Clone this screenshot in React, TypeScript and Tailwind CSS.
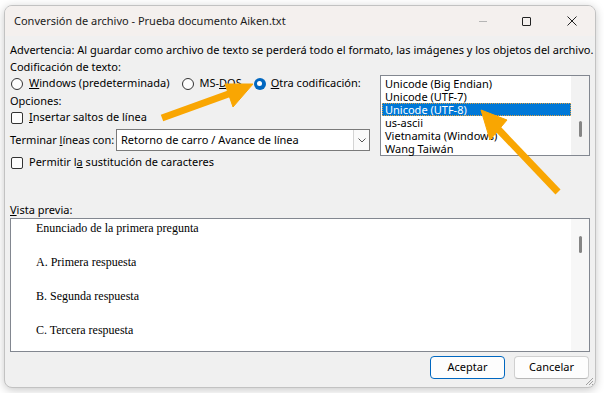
import React from "react";

const ui = "font-['Noto_Sans',sans-serif] text-[11px] text-black";

const Radio = ({ checked }: { checked?: boolean }) =>
  checked ? (
    <span className="w-[12px] h-[12px] rounded-full bg-[#0067c0] flex items-center justify-center shrink-0">
      <span className="w-[5px] h-[5px] rounded-full bg-white" />
    </span>
  ) : (
    <span className="w-[12px] h-[12px] rounded-full border border-[#333] bg-[#fdfdfd] shrink-0" />
  );

const Check = () => (
  <span className="w-[12px] h-[12px] rounded-[2px] border border-[#333] bg-[#fdfdfd] shrink-0" />
);

const encodings = [
  "Unicode (Big Endian)",
  "Unicode (UTF-7)",
  "Unicode (UTF-8)",
  "us-ascii",
  "Vietnamita (Windows)",
  "Wang Taiwán"
];

const preview = [
  "Enunciado de la primera pregunta",
  "A. Primera respuesta",
  "B. Segunda respuesta",
  "C. Tercera respuesta"
];

export default function App() {
  return (
    <div className={`w-[604px] h-[393px] bg-white relative overflow-hidden ${ui}`}>
      <div className="pt-[5px] pl-[4px]">
        <div className="w-[592px] h-[383px] rounded-[8px] border border-[#c2c2c2] bg-[#f0f0f0] shadow-[0_2px_10px_rgba(0,0,0,0.22)] flex flex-col overflow-hidden">
          {/* title bar */}
          <div className="h-[30px] bg-[#f4f0ee] flex items-center pl-[9px] shrink-0">
            <span className="flex-1 text-[#1b1b1b]">
              Conversión de archivo - Prueba documento Aiken.txt
            </span>
            <span className="w-[8px] h-px bg-[#b5b5b5] mr-[35px]" />
            <span className="w-[9px] h-[9px] border border-[#222] rounded-[1px] mr-[36px]" />
            <svg width="10" height="10" viewBox="0 0 10 10" className="mr-[18px]">
              <path d="M0.5 0.5 L9.5 9.5 M9.5 0.5 L0.5 9.5" stroke="#222" strokeWidth="1" />
            </svg>
          </div>

          {/* body */}
          <div className="flex-1 flex flex-col pl-[5px] pr-[4px] pt-[5px]">
            <div className="h-[17px] leading-[17px] whitespace-nowrap">
              Advertencia: Al guardar como archivo de texto se perderá todo el formato, las imágenes y los objetos del archivo.
            </div>
            <div className="h-[17px] leading-[17px]">Codificación de texto:</div>

            <div className="flex gap-[10px]">
              <div className="w-[360px] flex flex-col">
                <div className="h-[17px] flex items-center pl-px">
                  <Radio />
                  <span className="ml-[6px]">
                    <span className="underline">W</span>indows (predeterminada)
                  </span>
                  <span className="ml-[13px]" />
                  <Radio />
                  <span className="ml-[5px]">
                    MS-<span className="underline">D</span>OS
                  </span>
                  <span className="ml-[12px]" />
                  <Radio checked />
                  <span className="ml-[5px]">
                    <span className="underline">O</span>tra codificación:
                  </span>
                </div>
                <div className="h-[17px] leading-[17px]">Opciones:</div>
                <div className="h-[17px] flex items-center pl-px">
                  <Check />
                  <span className="ml-[6px]">
                    <span className="underline">I</span>nsertar saltos de línea
                  </span>
                </div>
                <div className="mt-[3px] h-[22px] flex items-center">
                  <span className="w-[106px]">
                    Terminar <span className="underline">l</span>íneas con:
                  </span>
                  <div className="flex-1 h-[22px] border border-[#7a7a7a] bg-white flex items-center">
                    <span className="flex-1 pl-[4px]">Retorno de carro / Avance de línea</span>
                    <span className="w-[16px] h-[20px] border-l border-[#d4d4d4] bg-[#fafafa] flex items-center justify-center">
                      <svg width="8" height="5" viewBox="0 0 8 5">
                        <path d="M0.5 0.5 L4 4 L7.5 0.5" fill="none" stroke="#555" strokeWidth="1" />
                      </svg>
                    </span>
                  </div>
                </div>
                <div className="mt-[3px] h-[17px] flex items-center pl-px">
                  <Check />
                  <span className="ml-[6px]">
                    Permitir l<span className="underline">a</span> sustitución de caracteres
                  </span>
                </div>
              </div>

              {/* encoding list */}
              <div className="w-[210px] h-[81px] border border-[#828790] bg-white flex">
                <div className="flex-1 pt-px pl-px">
                  {encodings.map((e, i) => (
                    <div
                      key={e}
                      className={`h-[13px] leading-[13px] pl-[3px] whitespace-nowrap ${
                        i === 2
                          ? "bg-[#0078d7] text-white outline-1 outline-dotted outline-[#e0a040] -outline-offset-1"
                          : ""
                      }`}
                    >
                      {e}
                    </div>
                  ))}
                </div>
                <div className="w-[18px] bg-[#f2f2f2] flex justify-center pt-[45px]">
                  <span className="w-[3px] h-[16px] bg-[#858585] rounded-full" />
                </div>
              </div>
            </div>

            <div className="mt-[30px] h-[17px] leading-[17px]">
              <span className="underline">V</span>ista previa:
            </div>

            <div className="w-[580px] h-[134px] border border-[#828790] bg-white flex">
              <div className="flex-1 pt-[2px] pl-[25px] flex flex-col gap-[20px] font-['Liberation_Serif',serif] text-[12px]">
                {preview.map((p) => (
                  <div key={p} className="h-[14px] leading-[14px]">
                    {p}
                  </div>
                ))}
              </div>
              <div className="w-[18px] bg-[#f7f7f7] flex justify-center pt-[17px]">
                <span className="w-[3px] h-[17px] bg-[#858585] rounded-full" />
              </div>
            </div>

            <div className="mt-[4px] pr-[2px] flex justify-end gap-[9px]">
              <button className="w-[75px] h-[23px] rounded-[4px] border border-[#0067c0] bg-[#fdfdfd] text-[11px]">
                Aceptar
              </button>
              <button className="w-[75px] h-[23px] rounded-[4px] border border-[#d0d0d0] border-b-[#b8b8b8] bg-[#fdfdfd] text-[11px]">
                Cancelar
              </button>
            </div>
          </div>
        </div>
      </div>

      {/* resize grip */}
      <svg className="absolute left-[584px] top-[376px]" width="10" height="10" viewBox="0 0 10 10">
        <path d="M9 2 L2 9 M9 5 L5 9 M9 8 L8 9" stroke="#a0a0a0" strokeWidth="1" />
      </svg>

      {/* annotation arrows */}
      <svg className="absolute inset-0 pointer-events-none" width="604" height="393" viewBox="0 0 604 393">
        <g fill="#f9a602" stroke="#f9a602">
          <line x1="162" y1="118" x2="234" y2="92" strokeWidth="7" />
          <polygon points="253,84 225,84 233,107" strokeWidth="1" />
          <line x1="558" y1="192" x2="498" y2="129" strokeWidth="7" />
          <polygon points="481,110 507,120 490,140" strokeWidth="1" />
        </g>
      </svg>
    </div>
  );
}
